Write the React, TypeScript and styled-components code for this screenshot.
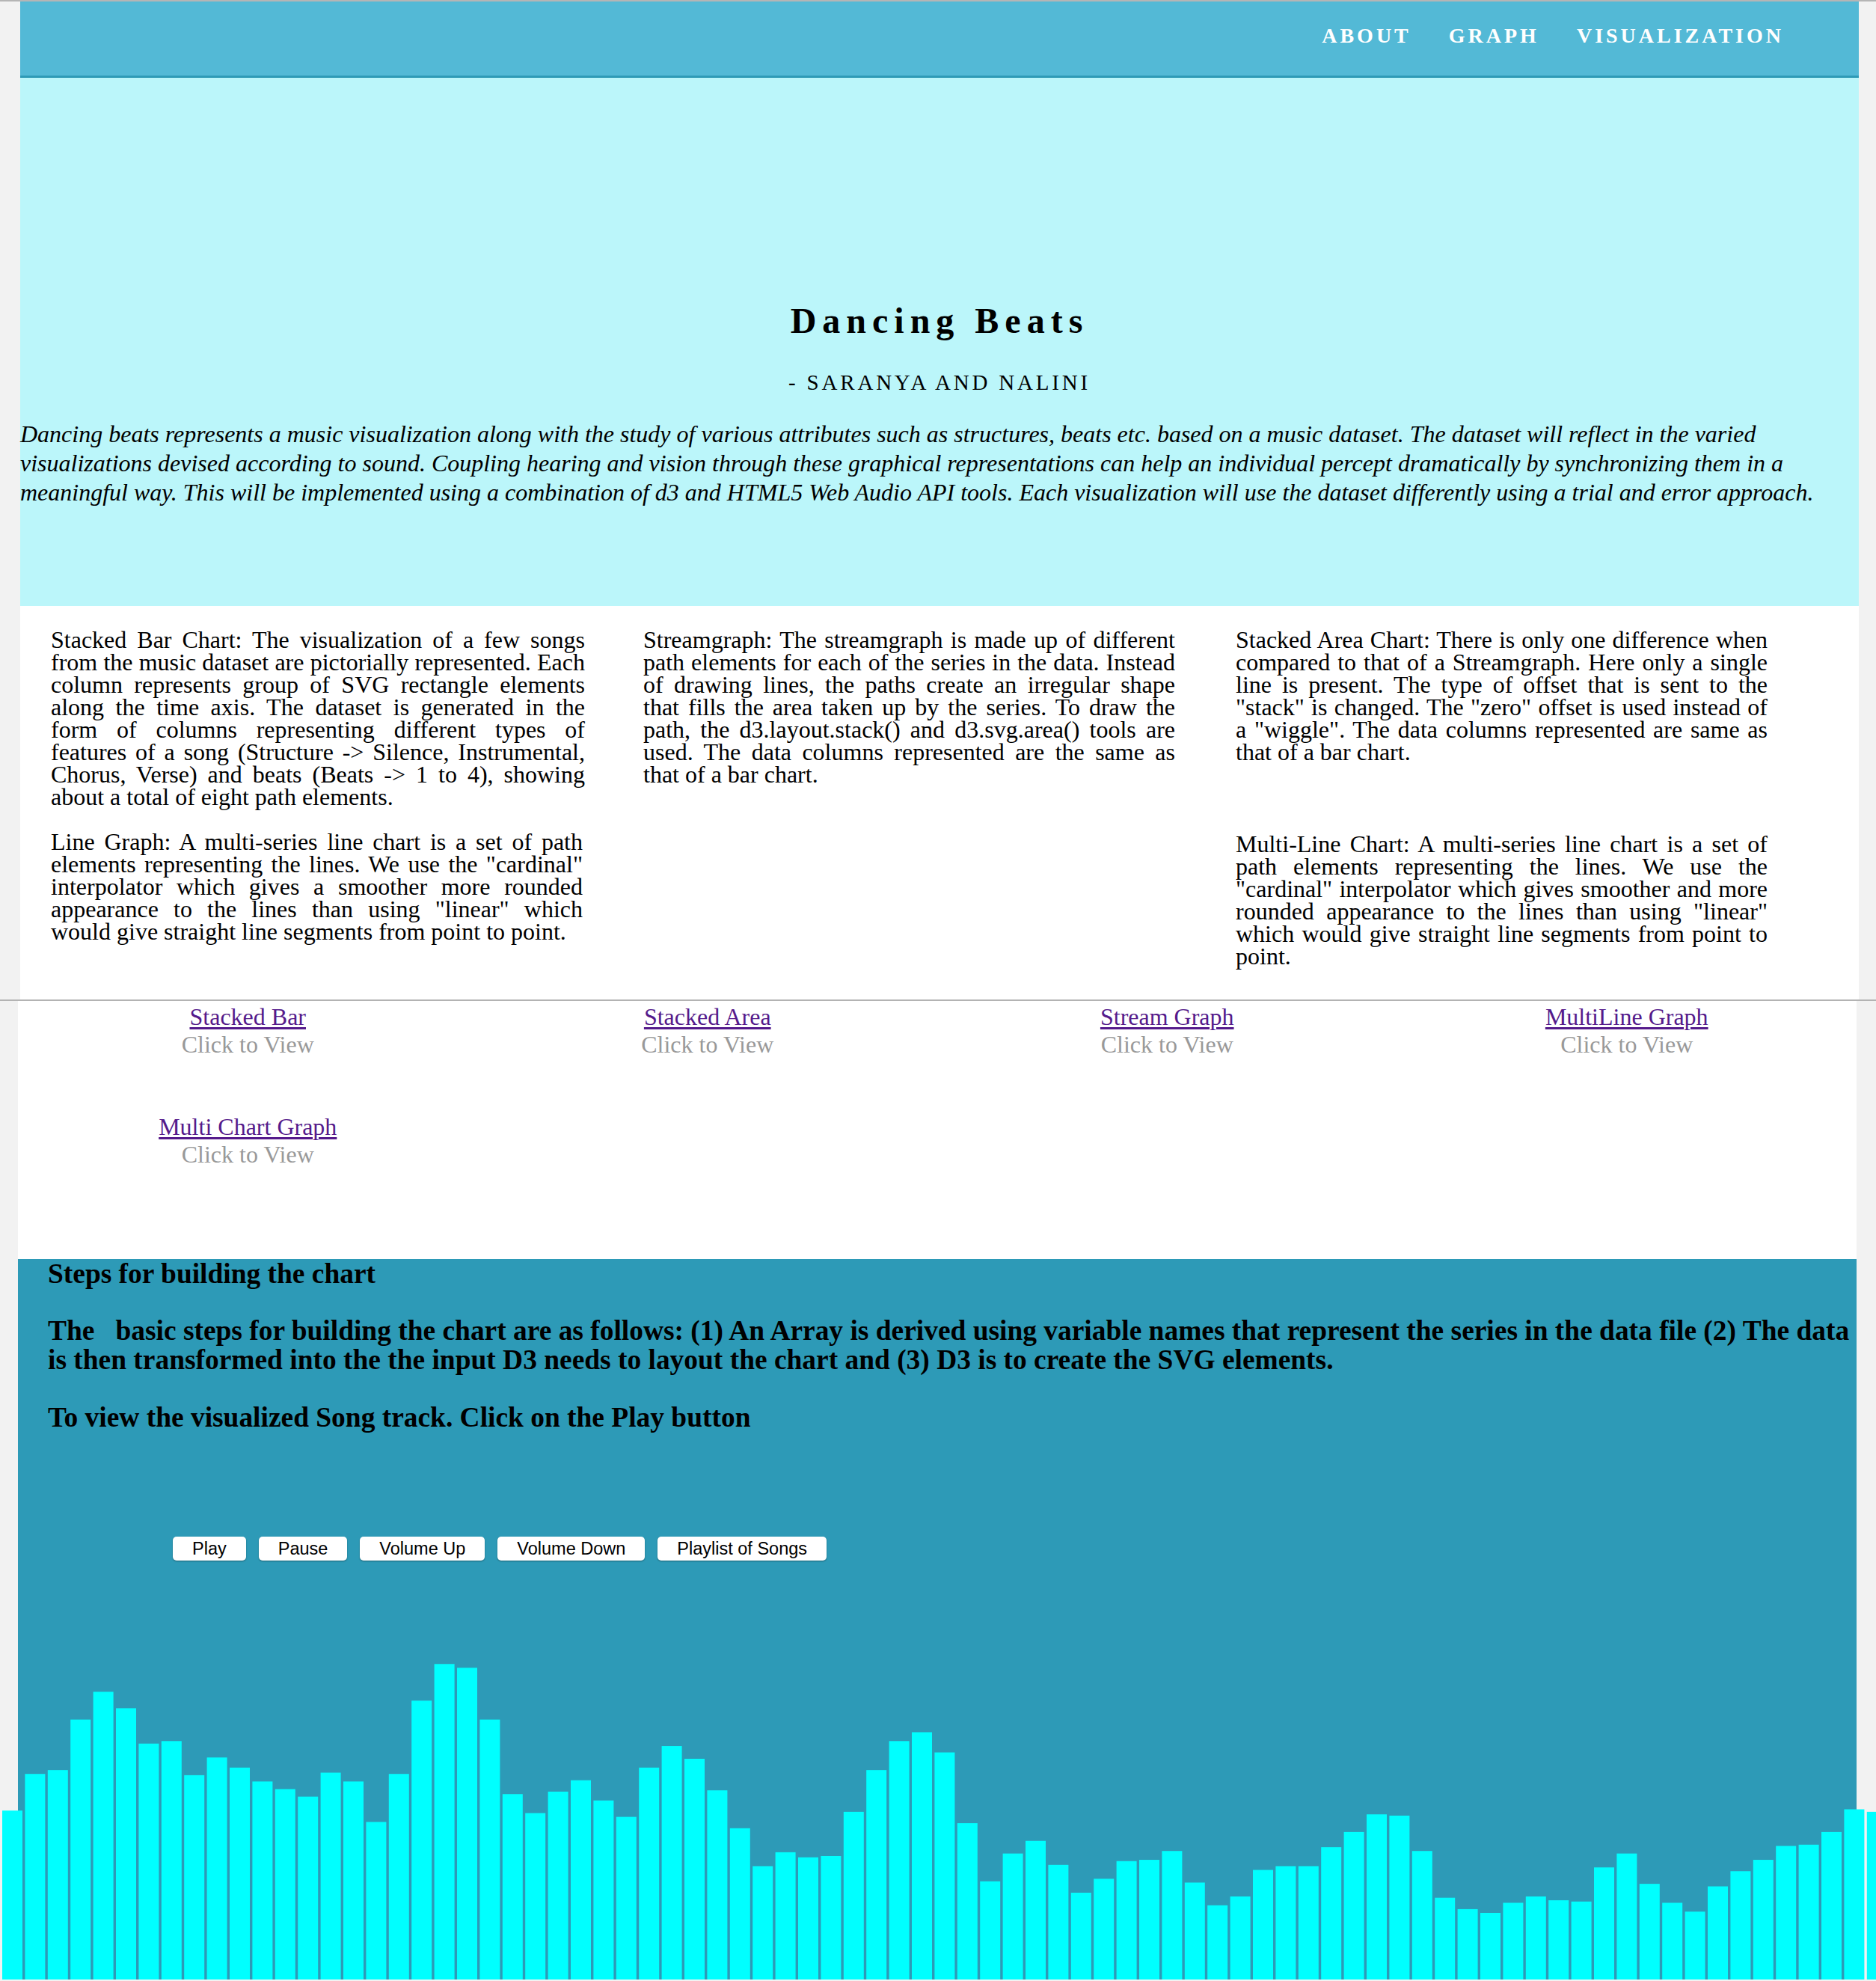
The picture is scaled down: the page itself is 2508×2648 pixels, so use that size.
import React from "react";
import styled, { createGlobalStyle } from "styled-components";

const GlobalStyle = createGlobalStyle`
  html, body {
    margin: 0;
    padding: 0;
  }
  body {
    background: #f2f2f2;
    border-top: 2px solid #b5b5b5;
    font-family: "Liberation Serif", "Times New Roman", serif;
    color: #000;
    overflow: hidden;
  }
`;

const Top = styled.div`
  margin: 0 23px 0 27px;
`;

const Header = styled.header`
  height: 99px;
  box-sizing: content-box;
  background: #53b9d6;
  border-bottom: 3px solid #2e9ab6;
  display: flex;
  justify-content: flex-end;
  align-items: flex-start;
  padding: 0 100px 0 0;
`;

const NavLink = styled.a`
  margin-top: 30px;
  margin-left: 50px;
  font-family: "Liberation Serif", serif;
  font-weight: bold;
  font-size: 28px;
  letter-spacing: 4px;
  color: #fff;
  text-decoration: none;
  text-transform: uppercase;
`;

const Hero = styled.section`
  background: #bbf6fa;
  height: 706px;
  box-sizing: border-box;
  padding-top: 297px;
  text-align: center;
`;

const Title = styled.h1`
  margin: 0;
  font-size: 48px;
  font-weight: bold;
  letter-spacing: 8px;
  line-height: 55px;
`;

const Subtitle = styled.div`
  margin-top: 39px;
  font-size: 29px;
  letter-spacing: 3.8px;
  line-height: 32px;
`;

const Intro = styled.p`
  margin: 34px 0 0;
  text-align: left;
  font-style: italic;
  font-size: 32px;
  line-height: 39px;
`;

const Columns = styled.section`
  background: #fff;
  height: 526px;
  box-sizing: border-box;
  padding: 30px 0 0 41px;
  display: grid;
  grid-template-columns: repeat(3, 711px);
  grid-template-rows: auto auto;
  column-gap: 81px;
  row-gap: 30px;
  align-content: start;
`;

const ColText = styled.p<{ $shift?: number; $wide?: boolean }>`
  margin: ${(p) => p.$shift ?? 0}px ${(p) => (p.$wide ? -3 : 0)}px 0 0;
  font-size: 32px;
  line-height: 30px;
  text-align: justify;
`;

const Divider = styled.hr`
  margin: 0;
  border: none;
  height: 2px;
  background: #b3b3b3;
`;

const Links = styled.section`
  margin: 0 26px 0 24px;
  background: #fff;
  height: 347px;
  box-sizing: border-box;
  padding-top: 3px;
  display: grid;
  grid-template-columns: repeat(4, 1fr);
  row-gap: 73px;
  align-content: start;
`;

const LinkItem = styled.div`
  text-align: center;
  font-size: 32px;
  line-height: 37px;
`;

const ChartLink = styled.a`
  display: block;
  color: #551a8b;
  text-decoration: underline;
  text-underline-offset: 3px;
`;

const Hint = styled.div`
  color: #999;
`;

const Steps = styled.section`
  margin: 0 26px 0 24px;
  background: #2d9ab7;
  height: 963px;
  box-sizing: border-box;
  overflow: visible;
`;

const StepHead = styled.h3<{ $top: number }>`
  margin: ${(p) => p.$top}px 0 0 40px;
  font-size: 37.44px;
  font-weight: bold;
  line-height: 39px;
`;

const ButtonRow = styled.div`
  margin-top: 140px;
  padding-left: 207px;
  display: flex;
  gap: 17px;
`;

const PlayerButton = styled.button`
  height: 32px;
  padding: 0 26px;
  border: none;
  border-radius: 5px;
  background: #fff;
  box-shadow: 0 1px 2px rgba(0, 0, 0, 0.35);
  font-family: "Liberation Sans", Arial, sans-serif;
  font-size: 23.5px;
  color: #000;
`;

const Bars = styled.svg`
  display: block;
  margin: 14px 0 0 -24px;
`;

const barTopsShrunk = [
  1433, 1404, 1401, 1361, 1339, 1352, 1380, 1378, 1405, 1391, 1399, 1410, 1416,
  1422, 1403, 1410, 1442, 1404, 1346, 1317, 1320, 1361, 1420, 1435, 1418, 1409,
  1425, 1438, 1399, 1382, 1392, 1417, 1447, 1477, 1466, 1470, 1469, 1434, 1401,
  1378, 1371, 1387, 1443, 1489, 1467, 1457, 1476, 1498, 1487, 1473, 1472, 1465,
  1490, 1508, 1501, 1480, 1477, 1477, 1462, 1450, 1436, 1437, 1465, 1502, 1511,
  1514, 1506, 1501, 1504, 1505, 1478, 1467, 1491, 1506, 1513, 1493, 1481, 1472,
  1461, 1460, 1450, 1432, 1434,
];

const SVG_TOP = 2100;
const SVG_H = 548;
const SCALE = 2508 / 1485;

const Visualizer: React.FC = () => (
  <Bars width={2508} height={SVG_H} viewBox={`0 0 2508 ${SVG_H}`}>
    {barTopsShrunk.map((t, i) => {
      const y = t * SCALE - SVG_TOP;
      return (
        <rect
          key={i}
          x={3 + i * 30.4}
          y={y}
          width={27}
          height={SVG_H - y}
          fill="#00ffff"
        />
      );
    })}
  </Bars>
);

const links = [
  "Stacked Bar",
  "Stacked Area",
  "Stream Graph",
  "MultiLine Graph",
  "Multi Chart Graph",
];

export default function App() {
  return (
    <>
      <GlobalStyle />
      <Top>
        <Header>
          <NavLink href="#">About</NavLink>
          <NavLink href="#">Graph</NavLink>
          <NavLink href="#">Visualization</NavLink>
        </Header>
        <Hero>
          <Title>Dancing Beats</Title>
          <Subtitle>- SARANYA AND NALINI</Subtitle>
          <Intro>
            Dancing beats represents a music visualization along with the study of
            various attributes such as structures, beats etc. based on a music
            dataset. The dataset will reflect in the varied visualizations devised
            according to sound. Coupling hearing and vision through these graphical
            representations can help an individual percept dramatically by
            synchronizing them in a meaningful way. This will be implemented using a
            combination of d3 and HTML5 Web Audio API tools. Each visualization will
            use the dataset differently using a trial and error approach.
          </Intro>
        </Hero>
        <Columns>
          <ColText $wide>
            Stacked Bar Chart: The visualization of a few songs from the music dataset
            are pictorially represented. Each column represents group of SVG rectangle
            elements along the time axis. The dataset is generated in the form of
            columns representing different types of features of a song (Structure -&gt;
            Silence, Instrumental, Chorus, Verse) and beats (Beats -&gt; 1 to 4),
            showing about a total of eight path elements.
          </ColText>
          <ColText>
            Streamgraph: The streamgraph is made up of different path elements for each
            of the series in the data. Instead of drawing lines, the paths create an
            irregular shape that fills the area taken up by the series. To draw the
            path, the d3.layout.stack() and d3.svg.area() tools are used. The data
            columns represented are the same as that of a bar chart.
          </ColText>
          <ColText>
            Stacked Area Chart: There is only one difference when compared to that of a
            Streamgraph. Here only a single line is present. The type of offset that is
            sent to the "stack" is changed. The "zero" offset is used instead of a
            "wiggle". The data columns represented are same as that of a bar chart.
          </ColText>
          <ColText>
            Line Graph: A multi-series line chart is a set of path elements representing
            the lines. We use the "cardinal" interpolator which gives a smoother more
            rounded appearance to the lines than using "linear" which would give
            straight line segments from point to point.
          </ColText>
          <div />
          <ColText $shift={3}>
            Multi-Line Chart: A multi-series line chart is a set of path elements
            representing the lines. We use the "cardinal" interpolator which gives
            smoother and more rounded appearance to the lines than using "linear" which
            would give straight line segments from point to point.
          </ColText>
        </Columns>
      </Top>
      <Divider />
      <Links>
        {links.map((l) => (
          <LinkItem key={l}>
            <ChartLink href="#">{l}</ChartLink>
            <Hint>Click to View</Hint>
          </LinkItem>
        ))}
      </Links>
      <Steps>
        <StepHead $top={-2}>Steps for building the chart</StepHead>
        <StepHead $top={37}>
          The&nbsp;&nbsp; basic steps for building the chart are as follows: (1) An
          Array is derived using variable names that represent the series in the data
          file (2) The data is then transformed into the the input D3 needs to layout
          the chart and (3) D3 is to create the SVG elements.
        </StepHead>
        <StepHead $top={38}>To view the visualized Song track. Click on the Play button</StepHead>
        <ButtonRow>
          <PlayerButton>Play</PlayerButton>
          <PlayerButton>Pause</PlayerButton>
          <PlayerButton>Volume Up</PlayerButton>
          <PlayerButton>Volume Down</PlayerButton>
          <PlayerButton>Playlist of Songs</PlayerButton>
        </ButtonRow>
        <Visualizer />
      </Steps>
    </>
  );
}
